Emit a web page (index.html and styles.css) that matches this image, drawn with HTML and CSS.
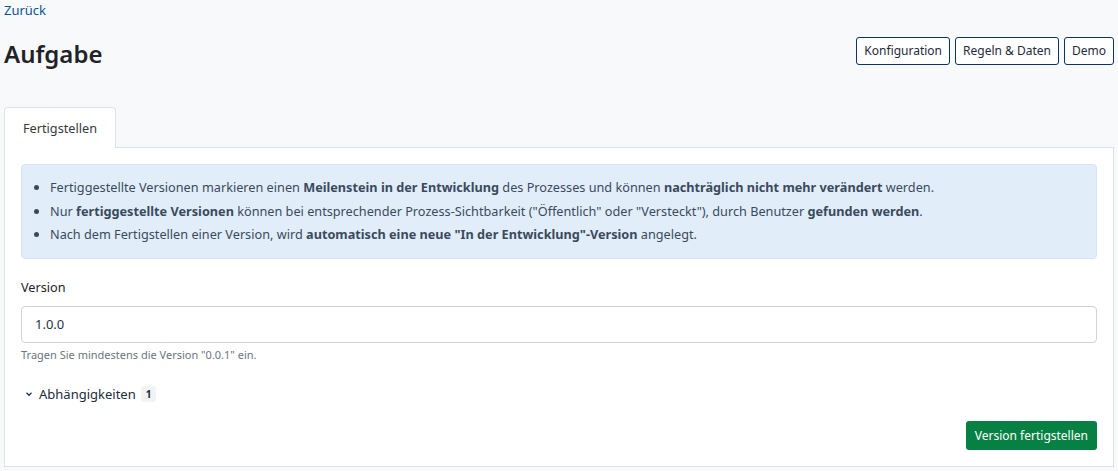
FILE: index.html
```html
<!DOCTYPE html>
<html lang="de">
<head>
    <meta charset="UTF-8">
    <title>Aufgabe</title>
    <link rel="stylesheet" href="styles.css">
</head>
<body>
    <a class="back-link" href="#">Zurück</a>
    <div class="page-head">
        <h1>Aufgabe</h1>
        <div class="head-actions">
            <button class="btn-outline">Konfiguration</button>
            <button class="btn-outline">Regeln &amp; Daten</button>
            <button class="btn-outline">Demo</button>
        </div>
    </div>

    <ul class="tabs">
        <li class="tab active">Fertigstellen</li>
    </ul>
    <div class="tab-panel">
        <div class="info-box">
            <ul>
                <li>Fertiggestellte Versionen markieren einen <b>Meilenstein in der Entwicklung</b> des Prozesses und können <b>nachträglich nicht mehr verändert</b> werden.</li>
                <li>Nur <b>fertiggestellte Versionen</b> können bei entsprechender Prozess-Sichtbarkeit ("Öffentlich" oder "Versteckt"), durch Benutzer <b>gefunden werden</b>.</li>
                <li>Nach dem Fertigstellen einer Version, wird <b>automatisch eine neue "In der Entwicklung"-Version</b> angelegt.</li>
            </ul>
        </div>

        <label class="field-label" for="version">Version</label>
        <input class="field-input" id="version" type="text" value="1.0.0">
        <div class="field-help">Tragen Sie mindestens die Version "0.0.1" ein.</div>

        <div class="deps">
            <svg class="chevron" width="10" height="10" viewBox="0 0 10 10">
                <path d="M2.5 3.8 L5 6.3 L7.5 3.8" fill="none" stroke="#1d3557" stroke-width="1.3"/>
            </svg>
            <span>Abhängigkeiten</span>
            <span class="badge">1</span>
        </div>

        <div class="form-actions">
            <button class="btn-success">Version fertigstellen</button>
        </div>
    </div>
</body>
</html>
```

FILE: styles.css
```css
body {
    font-family: "Noto Sans", "Open Sans", sans-serif;
    font-size: 12.7px;
    margin: 0;
    padding: 0 4px;
    background-color: #f8f9fb;
    color: #212529;
}
.back-link {
    display: block;
    color: #0a5694;
    text-decoration: none;
    line-height: 20px;
    font-size: 13px;
}
.page-head {
    display: flex;
    justify-content: space-between;
    align-items: center;
    margin-top: 17px;
}
h1 {
    margin: 0;
    font-size: 24px;
    font-weight: 600;
    color: #1f2328;
}
.head-actions {
    display: flex;
    gap: 5px;
    margin-top: -6px;
}
.btn-outline {
    font-family: inherit;
    font-size: 12px;
    color: #1f2a3a;
    background: #fff;
    border: 1px solid #0b3366;
    border-radius: 3px;
    height: 28px;
    padding: 0 7px;
}
.tabs {
    list-style: none;
    margin: 37px 0 0;
    padding: 0;
    display: flex;
}
.tab {
    padding: 0 18px;
    height: 40px;
    line-height: 40px;
    border: 1px solid #dee2e6;
    border-bottom: none;
    border-radius: 4px 4px 0 0;
    background: #fff;
    color: #343a40;
    margin-bottom: -1px;
    position: relative;
}
.tab-panel {
    background: #fff;
    border: 1px solid #dee2e6;
    padding: 16px 16px 15px;
    height: 287px;
}
.info-box {
    background: #e1eefa;
    border: 1px solid #d3e5f6;
    border-radius: 4px;
    padding: 11px 0 11px;
    color: #3a4a5e;
}
.info-box ul {
    margin: 0;
    padding-left: 28px;
}
.info-box li {
    line-height: 23.5px;
}
.info-box b {
    font-weight: 700;
}
.field-label {
    display: block;
    margin-top: 17px;
    line-height: 22px;
    color: #212529;
}
.field-input {
    display: block;
    box-sizing: border-box;
    width: 100%;
    height: 37px;
    margin-top: 8px;
    padding: 0 13px;
    font-family: inherit;
    font-size: 13px;
    color: #2a3140;
    border: 1px solid #ced4da;
    border-radius: 4px;
}
.field-help {
    font-size: 11px;
    color: #6c757d;
    margin-top: 4px;
    line-height: 16px;
}
.deps {
    display: flex;
    align-items: center;
    margin-top: 22px;
    margin-left: 3px;
    color: #1d2b40;
    gap: 5px;
    font-size: 13px;
}
.badge {
    font-size: 10px;
    font-weight: 700;
    background: #f1f3f5;
    border-radius: 3px;
    padding: 0 5px;
    line-height: 16px;
}
.form-actions {
    display: flex;
    justify-content: flex-end;
    margin-top: 18px;
}
.btn-success {
    font-family: inherit;
    font-size: 12px;
    color: #fff;
    background: #078143;
    border: none;
    border-radius: 3px;
    height: 29px;
    padding: 0 9px;
}
```
